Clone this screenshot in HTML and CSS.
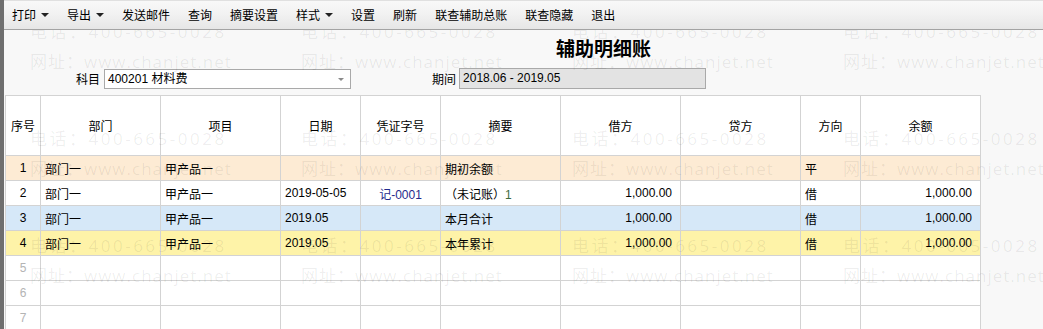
FILE: index.html
```html
<!DOCTYPE html>
<html lang="zh-CN">
<head>
    <meta charset="UTF-8">
    <title>辅助明细账</title>
    <link rel="stylesheet" href="styles.css">
</head>
<body>
    <div class="app">
        <div class="edge"></div>
        <div class="main">
            <div class="toolbar">
                <span class="tool">打印<i class="caret"></i></span>
                <span class="tool">导出<i class="caret"></i></span>
                <span class="tool">发送邮件</span>
                <span class="tool">查询</span>
                <span class="tool">摘要设置</span>
                <span class="tool">样式<i class="caret"></i></span>
                <span class="tool">设置</span>
                <span class="tool">刷新</span>
                <span class="tool">联查辅助总账</span>
                <span class="tool">联查隐藏</span>
                <span class="tool">退出</span>
            </div>

            <div class="head">
                <h1 class="title">辅助明细账</h1>
                <div class="filters">
                    <label class="field-label">科目</label>
                    <div class="select">400201 材料费<i class="select-arrow"></i></div>
                    <label class="field-label period-label">期间</label>
                    <div class="period">2018.06 - 2019.05</div>
                </div>
            </div>

            <table class="ledger">
                <colgroup>
                    <col style="width:35px">
                    <col style="width:120px">
                    <col style="width:120px">
                    <col style="width:80px">
                    <col style="width:80px">
                    <col style="width:120px">
                    <col style="width:120px">
                    <col style="width:120px">
                    <col style="width:60px">
                    <col style="width:120px">
                </colgroup>
                <thead>
                    <tr>
                        <th>序号</th>
                        <th>部门</th>
                        <th>项目</th>
                        <th>日期</th>
                        <th>凭证字号</th>
                        <th>摘要</th>
                        <th>借方</th>
                        <th>贷方</th>
                        <th>方向</th>
                        <th>余额</th>
                    </tr>
                </thead>
                <tbody>
                    <tr class="row-open">
                        <td class="seq">1</td>
                        <td>部门一</td>
                        <td>甲产品一</td>
                        <td></td>
                        <td></td>
                        <td>期初余额</td>
                        <td class="num"></td>
                        <td class="num"></td>
                        <td>平</td>
                        <td class="num"></td>
                    </tr>
                    <tr>
                        <td class="seq">2</td>
                        <td>部门一</td>
                        <td>甲产品一</td>
                        <td>2019-05-05</td>
                        <td class="voucher">记-0001</td>
                        <td>（未记账）<span class="count">1</span></td>
                        <td class="num">1,000.00</td>
                        <td class="num"></td>
                        <td>借</td>
                        <td class="num">1,000.00</td>
                    </tr>
                    <tr class="row-month">
                        <td class="seq">3</td>
                        <td>部门一</td>
                        <td>甲产品一</td>
                        <td>2019.05</td>
                        <td></td>
                        <td>本月合计</td>
                        <td class="num">1,000.00</td>
                        <td class="num"></td>
                        <td>借</td>
                        <td class="num">1,000.00</td>
                    </tr>
                    <tr class="row-year">
                        <td class="seq">4</td>
                        <td>部门一</td>
                        <td>甲产品一</td>
                        <td>2019.05</td>
                        <td></td>
                        <td>本年累计</td>
                        <td class="num">1,000.00</td>
                        <td class="num"></td>
                        <td>借</td>
                        <td class="num">1,000.00</td>
                    </tr>
                    <tr class="row-empty">
                        <td class="seq">5</td>
                        <td></td><td></td><td></td><td></td><td></td><td></td><td></td><td></td><td></td>
                    </tr>
                    <tr class="row-empty">
                        <td class="seq">6</td>
                        <td></td><td></td><td></td><td></td><td></td><td></td><td></td><td></td><td></td>
                    </tr>
                    <tr class="row-empty">
                        <td class="seq">7</td>
                        <td></td><td></td><td></td><td></td><td></td><td></td><td></td><td></td><td></td>
                    </tr>
                </tbody>
            </table>
        </div>

        <div class="watermark">
            <div class="mark"><span class="tel">电话：400-665-0028</span><span class="url">网址：www.chanjet.net</span></div>
            <div class="mark"><span class="tel">电话：400-665-0028</span><span class="url">网址：www.chanjet.net</span></div>
            <div class="mark"><span class="tel">电话：400-665-0028</span><span class="url">网址：www.chanjet.net</span></div>
            <div class="mark"><span class="tel">电话：400-665-0028</span><span class="url">网址：www.chanjet.net</span></div>
            <div class="mark"><span class="tel">电话：400-665-0028</span><span class="url">网址：www.chanjet.net</span></div>
            <div class="mark"><span class="tel">电话：400-665-0028</span><span class="url">网址：www.chanjet.net</span></div>
            <div class="mark"><span class="tel">电话：400-665-0028</span><span class="url">网址：www.chanjet.net</span></div>
            <div class="mark"><span class="tel">电话：400-665-0028</span><span class="url">网址：www.chanjet.net</span></div>
            <div class="mark"><span class="tel">电话：400-665-0028</span><span class="url">网址：www.chanjet.net</span></div>
            <div class="mark"><span class="tel">电话：400-665-0028</span><span class="url">网址：www.chanjet.net</span></div>
            <div class="mark"><span class="tel">电话：400-665-0028</span><span class="url">网址：www.chanjet.net</span></div>
            <div class="mark"><span class="tel">电话：400-665-0028</span><span class="url">网址：www.chanjet.net</span></div>
        </div>
    </div>
</body>
</html>
```

FILE: styles.css
```css
* {
    box-sizing: border-box;
}
html, body {
    margin: 0;
    padding: 0;
    height: 100%;
}
body {
    font-family: "Liberation Sans", "Noto Sans CJK SC", sans-serif;
    font-size: 12px;
    color: #000;
    background-color: #f8f8f8;
    overflow: hidden;
}
.app {
    position: relative;
    display: flex;
    height: 329px;
    overflow: hidden;
}
.edge {
    width: 4px;
    flex: none;
    background-color: #6f6f6f;
}
.main {
    flex: 1;
    min-width: 0;
}

/* barra de ferramentas */
.toolbar {
    position: relative;
    z-index: 2;
    height: 30px;
    display: flex;
    align-items: center;
    gap: 18px;
    padding: 0 0 1px 8px;
    background: linear-gradient(#f8f8f8, #f2f2f2 45%, #e6e6e6);
    border-top: 1px solid #e0e0e0;
    border-bottom: 1px solid #a3a3a3;
}
.tool {
    display: flex;
    align-items: center;
    white-space: nowrap;
}
.caret {
    width: 0;
    height: 0;
    margin-left: 5px;
    border-left: 4px solid transparent;
    border-right: 4px solid transparent;
    border-top: 4px solid #222;
}

/* titulo e filtros */
.head {
    padding-top: 7px;
}
.title {
    margin: 0;
    padding-left: 160px;
    text-align: center;
    font-size: 19px;
    line-height: 22px;
    font-weight: bold;
    font-family: "Noto Sans CJK SC", sans-serif;
}
.filters {
    display: flex;
    align-items: center;
    margin-top: 9px;
    padding-left: 72px;
    height: 21px;
}
.field-label {
    margin-right: 4px;
}
.period-label {
    margin-left: 81px;
}
.select, .period {
    position: relative;
    height: 21px;
    line-height: 19px;
    padding-left: 3px;
    border: 1px solid #a9a9a9;
}
.select {
    width: 247px;
    height: 20px;
    line-height: 18px;
    background-color: #fff;
}
.select-arrow {
    position: absolute;
    right: 6px;
    top: 8px;
    width: 0;
    height: 0;
    border-left: 3px solid transparent;
    border-right: 3px solid transparent;
    border-top: 3px solid #8a8a8a;
}
.period {
    width: 247px;
    margin-left: -1px;
    background-color: #e3e3e3;
}

/* tabela */
.ledger {
    margin: 6px 0 0 1px;
    width: 976px;
    table-layout: fixed;
    border-collapse: separate;
    border-spacing: 0;
    border-top: 1px solid #d3d3d3;
    border-left: 1px solid #d3d3d3;
    background-color: #fff;
}
.ledger th, .ledger td {
    padding: 0 4px;
    border-right: 1px solid #d3d3d3;
    border-bottom: 1px solid #d3d3d3;
    white-space: nowrap;
    overflow: hidden;
    text-align: left;
}
.ledger th {
    height: 60px;
    font-weight: normal;
    text-align: center;
}
.ledger td {
    height: 25px;
}
.ledger td.seq, .ledger td.voucher {
    text-align: center;
}
.ledger td.num {
    text-align: right;
    padding-right: 8px;
}
.voucher {
    color: #1f2a8c;
}
.count {
    color: #3d6b3d;
}
.row-open td {
    background-color: #fdebd4;
}
.row-month td {
    background-color: #d6e8f8;
}
.row-year td {
    background-color: #fef3a8;
}
.row-empty td.seq {
    color: #b4b4b4;
}

/* marca d'agua */
.watermark {
    position: absolute;
    z-index: 1;
    top: 0;
    left: 0;
    right: 0;
    bottom: 0;
    padding: 17px 0 0 30px;
    display: grid;
    grid-template-columns: repeat(4, 271px);
    grid-auto-rows: 107px;
    pointer-events: none;
    color: rgba(0, 0, 0, 0.07);
    font-family: "Open Sans", "Noto Sans CJK SC", sans-serif;
    font-size: 17px;
}
.mark {
    display: flex;
    flex-direction: column;
    line-height: 30px;
    white-space: nowrap;
}
.tel {
    letter-spacing: 2.5px;
}
.url {
    letter-spacing: 1px;
}
```
